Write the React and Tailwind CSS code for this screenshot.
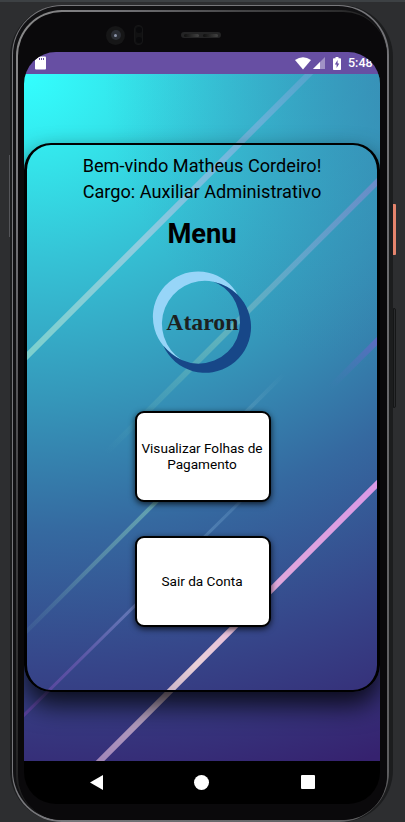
import React from "react";

function Streak({ id, x1, y1, x2, y2, w, stops }) {
  return (
    <>
      <linearGradient id={id} gradientUnits="userSpaceOnUse" x1={x1} y1={y1} x2={x2} y2={y2}>
        {stops.map(([offset, color, opacity]) => (
          <stop key={offset} offset={offset} stopColor={color} stopOpacity={opacity} />
        ))}
      </linearGradient>
      <line x1={x1} y1={y1} x2={x2} y2={y2} stroke={`url(#${id})`} strokeWidth={w} />
    </>
  );
}

/* Wallpaper: coordinates start at the lower edge of the status bar. */
function Wallpaper() {
  return (
    <svg className="absolute inset-0" width="356" height="687" viewBox="0 0 356 687" aria-hidden="true">
      <defs>
        <radialGradient id="bg" gradientUnits="userSpaceOnUse" cx="0" cy="0" r="740" gradientTransform="scale(1.22 1)">
          <stop offset="0" stopColor="#33ffff" />
          <stop offset="0.12" stopColor="#34e4ea" />
          <stop offset="0.25" stopColor="#35c3d6" />
          <stop offset="0.44" stopColor="#3597ba" />
          <stop offset="0.62" stopColor="#3569a0" />
          <stop offset="0.8" stopColor="#36468a" />
          <stop offset="1" stopColor="#36226f" />
        </radialGradient>
        <radialGradient id="corner" gradientUnits="userSpaceOnUse" cx="380" cy="0" r="300">
          <stop offset="0" stopColor="#3a80ae" stopOpacity="0.5" />
          <stop offset="1" stopColor="#3a80ae" stopOpacity="0" />
        </radialGradient>
      </defs>
      <rect width="356" height="687" fill="url(#bg)" />
      <rect width="356" height="687" fill="url(#corner)" />
      <Streak id="s1" x1={290} y1={-5} x2={-2} y2={287} w={6} stops={[[0, "#6fa6d6", 0.5], [0.3, "#83b7e0", 0.8], [0.6, "#a3cfe2", 0.8], [1, "#88d8ce", 0.85]]} />
      <Streak id="s2" x1={360} y1={101} x2={82} y2={379} w={5.5} stops={[[0, "#7a86cc", 0.75], [0.3, "#74a9d0", 0.7], [0.6, "#78c0bd", 0.6], [1, "#60b0b8", 0]]} />
      <Streak id="s3" x1={358} y1={262} x2={306} y2={314} w={6} stops={[[0, "#6c62cc", 0.8], [1, "#4c78b8", 0]]} />
      <Streak id="s5" x1={260} y1={300} x2={2} y2={558} w={4} stops={[[0, "#6aa8c4", 0], [0.15, "#6aa8c4", 0.4], [0.5, "#78bbb8", 0.7], [0.75, "#70a7b0", 0.5], [1, "#6090a8", 0.15]]} />
      <Streak id="s6" x1={228} y1={416} x2={-2} y2={643} w={3} stops={[[0, "#5d90c0", 0.3], [0.25, "#6a98c4", 0.6], [0.5, "#7387c4", 0.75], [0.75, "#6258aa", 0.85], [1, "#6040a0", 0.8]]} />
      <Streak id="s4" x1={358} y1={405} x2={72} y2={691} w={6} stops={[[0, "#da98e6", 1], [0.35, "#e0a6dc", 1], [0.65, "#ead0d8", 1], [0.8, "#b8a4c0", 1], [1, "#a084b8", 1]]} />
    </svg>
  );
}

function StatusBar() {
  return (
    <div className="flex h-[22px] w-[356px] shrink-0 items-center justify-between bg-[#674fa3] pl-[11px]">
      <svg width="11" height="14" viewBox="0 0 11 14">
        <path d="M3.5 0.5H10Q11 .5 11 1.5V12.5Q11 13.5 10 13.5H1Q0 13.5 0 12.5V4Z" fill="#fff" />
        <path d="M4.5 2v2M6.5 2v2M8.5 2v2" stroke="#674fa3" strokeWidth="1" />
      </svg>
      <div className="flex items-center">
        <svg className="mr-0.5" width="16" height="13" viewBox="0 0 16 13">
          <path d="M0 3Q8-2.5 16 3L8 12.5Z" fill="#fff" />
        </svg>
        <svg className="mr-2" width="12" height="12" viewBox="0 0 12 12">
          <path d="M0 12L12 0V12Z" fill="#fff" fillOpacity=".38" />
          <path d="M0 12L7 5V12Z" fill="#fff" />
        </svg>
        <svg className="mr-[7px]" width="8" height="13" viewBox="0 0 8 13">
          <path d="M2.5 0h3v1.2H7.2Q8 1.2 8 2V12.2Q8 13 7.2 13H.8Q0 13 0 12.2V2Q0 1.2.8 1.2H2.5Z" fill="#fff" />
          <path d="M4.6 3L1.8 7.6H3.6V11L6.3 6.4H4.6Z" fill="#674fa3" />
        </svg>
        <span className="mr-1.5 w-[26px] text-[12.5px] leading-none font-medium whitespace-nowrap text-white">5:48</span>
      </div>
    </div>
  );
}

function Logo() {
  return (
    <svg className="mt-[14px] ml-px shrink-0" width="115" height="115" viewBox="0 0 345 345" role="img" aria-label="Ataron">
      <path d="M278 89A135.8 135.8 0 1 0 55 242Q80 270 110 285A129 129 0 0 1 205 50Q248 60 278 89Z" fill="#97d5f8" />
      <path d="M205 50Q248 60 278 89A137.5 137.5 0 1 1 55 242Q78 270 110 285Q135 296 160 296A125 121 0 0 0 285 175A112 128 0 0 0 205 50Z" fill="#174788" />
      <text x="64" y="194" textLength="216" lengthAdjust="spacingAndGlyphs" fontSize="72" fontWeight="700" fill="#1c211f" fontFamily="'Liberation Serif', serif">Ataron</text>
    </svg>
  );
}

function MenuButton({ children }) {
  return (
    <button className="flex h-[91px] w-[136px] shrink-0 items-center justify-center rounded-[9px] border-2 border-black bg-white pr-px pb-px text-center text-[13.6px] leading-4 whitespace-nowrap text-black shadow-[0_2px_6px_rgba(0,0,0,0.75)]">
      {children}
    </button>
  );
}

function MenuCard() {
  return (
    <main className="flex h-[549px] w-[356px] shrink-0 flex-col items-center rounded-[27px] border-x-[3px] border-y-2 border-black shadow-[0_13px_26px_rgba(0,0,0,0.8)]">
      <p className="mt-[8px] text-[18.15px] leading-[26px] whitespace-nowrap">Bem-vindo Matheus Cordeiro!</p>
      <p className="text-[18.15px] leading-[26px] whitespace-nowrap">Cargo: Auxiliar Administrativo</p>
      <h1 className="mt-[12px] text-[27.3px] leading-[34px] font-bold">Menu</h1>
      <Logo />
      <div className="mt-[31px] ml-px flex flex-col gap-[34px]">
        <MenuButton>
          <span>
            Visualizar Folhas de
            <br />
            Pagamento
          </span>
        </MenuButton>
        <MenuButton>Sair da Conta</MenuButton>
      </div>
    </main>
  );
}

function NavigationBar() {
  return (
    <nav className="flex h-[44px] w-[356px] shrink-0 items-center bg-black pl-[66px]">
      <svg width="13" height="15" viewBox="0 0 13 15"><path d="M13 0V15L0 7.5Z" fill="#fff" /></svg>
      <span className="ml-[91px] size-[15px] rounded-full bg-white" />
      <span className="ml-[92px] size-[14px] rounded-[1px] bg-white" />
    </nav>
  );
}

function Bezel() {
  return (
    <div className="flex h-[40px] shrink-0 items-center pt-[6px] pl-[82px]">
      <span className="flex size-[19px] items-center justify-center rounded-full bg-[#161617]">
        <span className="flex size-[10px] items-center justify-center rounded-full bg-[#2a2d34]">
          <span className="size-[3px] rounded-full bg-[#8c95ab]" />
        </span>
      </span>
      <span className="ml-[9px] flex h-[20px] w-[9px] flex-col items-center justify-between rounded-[4px] border border-[#161617] bg-[#111112] py-px">
        <span className="size-[6px] rounded-full bg-[#09090b]" />
        <span className="size-[6px] rounded-full bg-[#09090b]" />
      </span>
      <span className="ml-[38px] flex h-[6px] w-[40px] items-center justify-between rounded-full bg-[#242425] px-[3px]">
        <span className="h-[3px] w-[15px] rounded-full bg-linear-to-r from-[#101010] to-[#444]" />
        <span className="h-[3px] w-[15px] rounded-full bg-linear-to-r from-[#101010] to-[#444]" />
      </span>
    </div>
  );
}

export default function App() {
  return (
    <div className="flex h-[822px] w-[405px] overflow-hidden border-t-2 border-[#3d4144] bg-[#2d2e30] font-[Roboto,sans-serif] text-black">
      <div className="ml-[9px] w-px shrink-0 pt-[153px]">
        <div className="h-[82px] bg-[#55565a]" />
      </div>
      <div className="mt-[3px] h-[817px] w-[383px] shrink-0 rounded-[52px] bg-[#1c1d1e] pr-[4px] pl-[2px]">
        <div className="h-[817px] rounded-[50px] bg-[linear-gradient(110deg,#77777b,#77777b_50%,#5c5c5e)] pt-px pr-[2px] pb-[2px] pl-px">
          <div className="h-[814px] rounded-[49px] bg-[#111113] pt-[4px] pl-[3px]">
            <div className="h-[810px] rounded-[46px] bg-[linear-gradient(115deg,#8c8c8c,#77777b_12%,#454547_30%,#151515_55%)] pt-[2px] pl-[2px]">
              <div className="h-[808px] rounded-[44px] bg-[#0a090b] pl-[6px]">
                <Bezel />
                <div className="flex h-[752px] w-[356px] flex-col overflow-hidden rounded-[32px]">
                  <StatusBar />
                  <div className="relative h-[686px] w-[356px] shrink-0">
                    <Wallpaper />
                    <div className="relative h-[686px] overflow-hidden pt-[69px]">
                      <MenuCard />
                    </div>
                  </div>
                  <NavigationBar />
                </div>
              </div>
            </div>
          </div>
        </div>
      </div>
      <div className="w-[3px] shrink-0 pt-[202px]">
        <div className="h-[51px] rounded-r-[1px] bg-[#e5846d]" />
        <div className="mt-[53px] h-[100px] rounded-r-[2px] border border-[#151617] bg-[#2a2b2d]" />
      </div>
    </div>
  );
}
